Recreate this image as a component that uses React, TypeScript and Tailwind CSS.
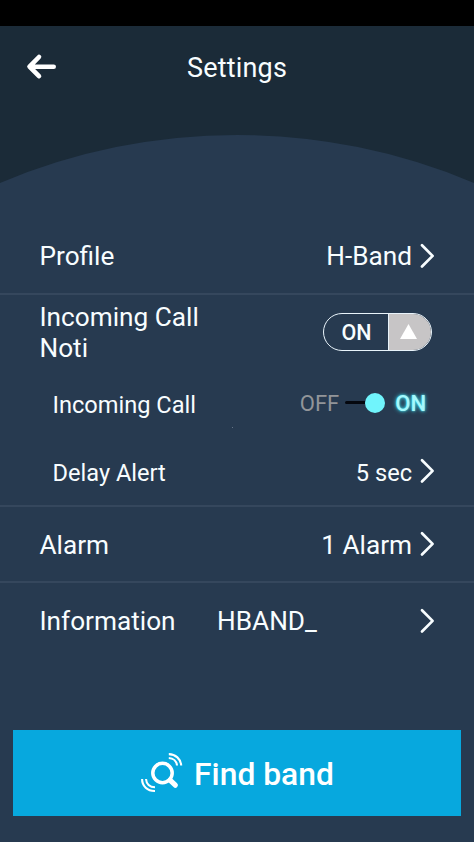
import type { ReactNode } from 'react';

function Chevron() {
  return (
    <svg width="15" height="26" viewBox="0 0 15 26" fill="none" stroke="#f8fdff" strokeWidth="2.7" strokeLinecap="round" strokeLinejoin="round">
      <path d="M2 2.3 L12.6 12.9 L2 23.5" />
    </svg>
  );
}

function Row({ label, children, className, labelClass = 'pt-[2px]' }: { label: string; children?: ReactNode; className: string; labelClass?: string }) {
  return (
    <div className={`flex items-center justify-between pr-[39px] ${className}`}>
      <span className={`whitespace-nowrap ${labelClass}`}>{label}</span>
      {children}
    </div>
  );
}

function SearchIcon() {
  return (
    <svg width="44" height="42" viewBox="0 0 44 42" fill="none" stroke="white" strokeLinecap="round">
      <circle cx="22.5" cy="21" r="9.7" strokeWidth="3.5" />
      <path d="M30 28.2 L35.3 33.2" strokeWidth="5.2" />
      <path d="M28.8 2.1 C35.5 2.1 40.8 7 41.2 13.5" strokeWidth="2.1" strokeLinecap="butt" />
      <path d="M28.8 6 C33.3 6.2 36.6 9.2 37 13.5" strokeWidth="2.1" strokeLinecap="butt" />
      <path d="M2.1 27 C2 34 7.5 39.2 15 39" strokeWidth="2.1" strokeLinecap="butt" />
      <path d="M6 27 C6.3 31.8 9.8 35.1 15 35.2" strokeWidth="2.1" strokeLinecap="butt" />
    </svg>
  );
}

export default function App() {
  return (
    <div className="flex h-[842px] w-[474px] flex-col overflow-hidden bg-[#273a50] font-['Roboto',sans-serif] text-[26.2px] leading-[31px] text-[#f8fdff]">
      <div className="h-[26px] shrink-0 bg-black" />
      <header className="relative h-[192px] shrink-0">
        <svg className="absolute inset-0" width="474" height="192" viewBox="0 0 474 192">
          <path d="M0 0 H474 V157 A609 609 0 0 0 0 157 Z" fill="#1b2b38" />
        </svg>
        <div className="relative grid h-[82px] grid-cols-[80px_1fr_80px] items-center">
          <svg className="ml-[26px]" width="31" height="28" viewBox="0 0 31 28" fill="none" stroke="white" strokeWidth="4.6" strokeLinecap="round" strokeLinejoin="round">
            <path d="M13 4 L3.5 13.7 L13 23.2 M4 13.7 H27.7" />
          </svg>
          <h1 className="pt-[2px] text-center text-[27px] tracking-[0.2px]">Settings</h1>
        </div>
      </header>
      <main className="flex flex-col">
        <Row label="Profile" className="h-[77px] border-b-2 border-[#35475d] pl-[39.5px]">
          <span className="flex items-center gap-[8px]"><span className="pt-[2px]">H-Band</span><Chevron /></span>
        </Row>
        <div className="flex h-[73px] items-center justify-between pr-[42px] pl-[39.5px]">
          <span className="w-[170px] pt-[2px]">Incoming Call Noti</span>
          <div className="flex h-[38px] w-[109px] overflow-hidden rounded-full border border-[#e9f4fb] text-[21.5px] font-medium">
            <span className="flex flex-1 items-center justify-center pt-[2px] pl-[1px]">ON</span>
            <span className="flex w-[43px] items-center justify-center border-l border-[#e9f4fb] bg-[#c7c5c6]">
              <svg className="mr-[4px]" width="17" height="15" viewBox="0 0 17 15"><path d="M8.5 0 L17 15 H0 Z" fill="white" /></svg>
            </span>
          </div>
        </div>
        <Row label="Incoming Call" labelClass="pt-[7px]" className="h-[68px] pl-[52.5px] text-[23.6px]">
          <span className="mr-[9px] flex items-center text-[22px]">
            <span className="pt-[2px] text-[#929599]">OFF</span>
            <span className="ml-[6px] flex items-center pt-[1px]">
              <span className="h-[3px] w-[20px] rounded-l-full bg-[#05080f]" />
              <span className="size-[20px] rounded-full bg-[#70f4fc]" />
            </span>
            <span className="ml-[10px] pt-[2px] font-medium text-[#a5f8fc] [text-shadow:0_0_2px_#3fe0f0,0_0_4px_#3fe0f0]">ON</span>
          </span>
        </Row>
        <div className="relative h-0"><span className="absolute top-[-9px] left-[232px] size-[1px] bg-[#657487]" /></div>
        <Row label="Delay Alert" labelClass="pt-[5px]" className="h-[71px] border-b-2 border-[#35475d] pl-[52.5px] text-[23.6px]">
          <span className="flex items-center gap-[8px]"><span className="pt-[5px]">5 sec</span><Chevron /></span>
        </Row>
        <Row label="Alarm" className="h-[76px] border-b-2 border-[#35475d] pl-[39.5px]">
          <span className="flex items-center gap-[8px]"><span className="pt-[2px]">1 Alarm</span><Chevron /></span>
        </Row>
        <Row label="Information" labelClass="" className="h-[76px] pl-[39.5px]">
          <span className="ml-[41.5px] flex-1">HBAND_</span>
          <Chevron />
        </Row>
      </main>
      <button className="mx-[13px] mt-[71px] flex h-[86px] items-center justify-center gap-[10px] bg-[#07a8de] text-[31.8px] font-medium text-white">
        <SearchIcon />
        <span className="pt-[2px]">Find band</span>
      </button>
    </div>
  );
}
